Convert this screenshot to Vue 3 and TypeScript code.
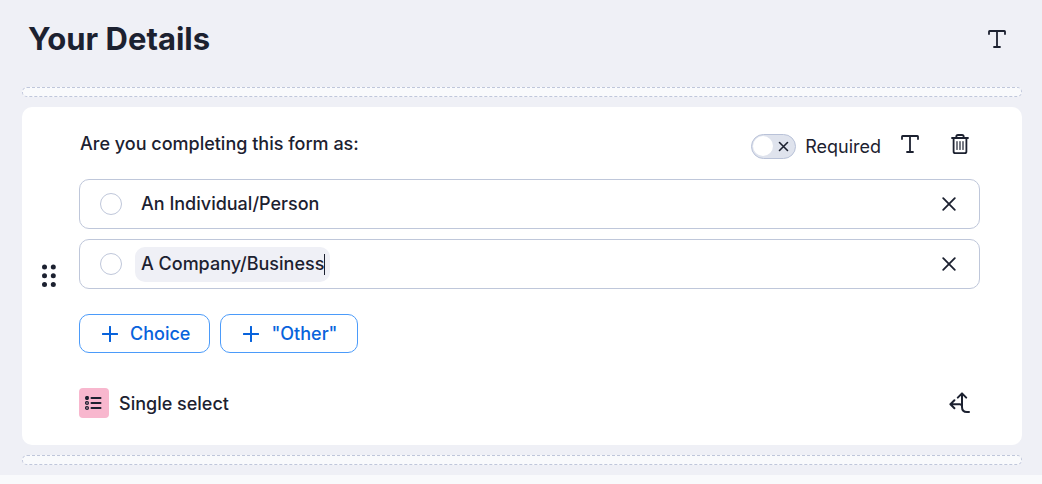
<script setup lang="ts">
import { ref } from 'vue'

interface Choice {
  id: number
  label: string
}

const title = ref('Your Details')
const question = ref('Are you completing this form as:')
const required = ref(false)
const activeId = ref(2)
const choices = ref<Choice[]>([
  { id: 1, label: 'An Individual/Person' },
  { id: 2, label: 'A Company/Business' },
])

function addChoice(label: string) {
  const id = Math.max(0, ...choices.value.map((c) => c.id)) + 1
  choices.value.push({ id, label })
  activeId.value = id
}

function removeChoice(id: number) {
  choices.value = choices.value.filter((c) => c.id !== id)
}
</script>

<template>
  <main class="section">
    <header class="section-head">
      <h1>{{ title }}</h1>
      <button class="icon-btn" type="button" aria-label="Section text">
        <svg width="20" height="20" viewBox="0 0 20 20" class="line">
          <path d="M2 5V2.6Q2 2 2.6 2H17.4Q18 2 18 2.600V5M10 2V18M7 18H13" />
        </svg>
      </button>
    </header>

    <div class="drop-zone"></div>

    <article class="card">
      <button class="handle" type="button" aria-label="Move question">
        <svg width="14" height="24" viewBox="0 0 14 24">
          <g fill="#1c2130">
            <circle cx="2.500" cy="3" r="2.500" /><circle cx="11.300" cy="3" r="2.500" />
            <circle cx="2.500" cy="11.700" r="2.500" /><circle cx="11.300" cy="11.700" r="2.500" />
            <circle cx="2.500" cy="20.400" r="2.500" /><circle cx="11.300" cy="20.400" r="2.500" />
          </g>
        </svg>
      </button>

      <div class="content">
        <div class="question-row">
          <h2>{{ question }}</h2>
          <label class="required">
            <span class="toggle">
              <input v-model="required" type="checkbox" role="switch" />
              <span class="knob"></span>
              <svg width="11" height="11" viewBox="0 0 11 11" class="line">
                <path d="M1.500 1.500L9.500 9.500M9.500 1.500L1.500 9.500" />
              </svg>
            </span>
            <span class="required-text">Required</span>
          </label>
          <button class="icon-btn" type="button" aria-label="Question text">
            <svg width="20" height="20" viewBox="0 0 20 20" class="line">
              <path d="M2 5V2.600Q2 2 2.600 2H17.400Q18 2 18 2.600V5M10 2V18M7 18H13" />
            </svg>
          </button>
          <button class="icon-btn trash" type="button" aria-label="Delete question">
            <svg width="20" height="22" viewBox="0 0 20 22" class="line">
              <path d="M2 5H18M3.600 5V18.500Q3.600 20.200 5.300 20.200H14.700Q16.400 20.200 16.400 18.500V5M6.300 5V3.800Q6.300 2 8 2H12Q13.700 2 13.700 3.800V5" />
              <path class="thin" d="M7 8.500V16.500M10 8.500V16.500M13 8.500V16.500" />
            </svg>
          </button>
        </div>

        <ul class="choices">
          <li v-for="choice in choices" :key="choice.id" class="choice">
            <input class="radio" type="radio" name="answer" :aria-label="choice.label" disabled />
            <span class="editor" :class="{ active: choice.id === activeId }">
              <input
                v-model="choice.label"
                class="choice-text"
                type="text"
                aria-label="Choice text"
                @focus="activeId = choice.id"
              />
              <span v-if="choice.id === activeId" class="caret"></span>
            </span>
            <button class="icon-btn remove" type="button" aria-label="Remove choice" @click="removeChoice(choice.id)">
              <svg width="14" height="14" viewBox="0 0 14 14" class="line">
                <path d="M1.200 1.200L12.800 12.800M12.800 1.200L1.200 12.800" />
              </svg>
            </button>
          </li>
        </ul>

        <div class="actions">
          <button class="add" type="button" @click="addChoice('')">
            <svg width="16" height="16" viewBox="0 0 16 16"><path d="M8 .8V15.200M.8 8H15.200" /></svg>
            Choice
          </button>
          <button class="add" type="button" @click="addChoice('Other')">
            <svg width="16" height="16" viewBox="0 0 16 16"><path d="M8 .8V15.200M.8 8H15.200" /></svg>
            "Other"
          </button>
        </div>

        <footer class="card-foot">
          <span class="type-badge">
            <svg width="18" height="16" viewBox="0 0 18 16">
              <g fill="none" stroke="#1c2130">
                <path stroke-width="2" stroke-linecap="round" d="M6.500 3H15.500M6.500 8H15.500M6.500 13H15.500" />
                <rect x=".8" y="1.800" width="2.400" height="2.400" rx=".6" fill="#1c2130" stroke-width="1.400" />
                <circle cx="2" cy="8" r="1.400" stroke-width="1.300" />
                <circle cx="2" cy="13" r="1.400" stroke-width="1.300" />
              </g>
            </svg>
          </span>
          <span class="type-name">Single select</span>
          <button class="icon-btn" type="button" aria-label="Branching logic">
            <svg width="22" height="22" viewBox="0 0 22 22" class="line branch">
              <path d="M20 20H18Q13 20 13 15V1.600M8.800 5.600L13 1.400L17.200 5.600M13 14Q12.600 12.300 10.800 12.300H1.500M5.400 8.300L1.400 12.300L5.400 16.200" />
            </svg>
          </button>
        </footer>
      </div>
    </article>

    <div class="drop-zone"></div>
  </main>
</template>

<style>
body {
  background: #f9fafc;
}
</style>

<style scoped>
.section {
  box-sizing: border-box;
  display: flex;
  flex-direction: column;
  gap: 10px;
  padding: 0 20px 10px 22px;
  background: #eff0f6;
  color: #1c2130;
  font-family: Inter, "Liberation Sans", sans-serif;
  font-size: 18px;
  line-height: 24px;
}

button {
  font: inherit;
  color: inherit;
  cursor: pointer;
}

svg {
  display: block;
}

.line {
  fill: none;
  stroke: #1c2130;
  stroke-width: 1.8;
  stroke-linecap: round;
  stroke-linejoin: round;
}

.line.branch {
  stroke-width: 2;
}

.thin {
  stroke-width: 1.2;
}

.section-head {
  display: flex;
  align-items: center;
  justify-content: space-between;
  height: 77px;
  padding: 0 15px 0 6px;
}

h1 {
  margin: 0;
  font-size: 31px;
  font-weight: 700;
  line-height: 40px;
}

.icon-btn {
  display: flex;
  flex: none;
  padding: 0;
  border: 0;
  background: none;
}

.drop-zone {
  box-sizing: border-box;
  height: 10px;
  border: 1px dashed #c0c7db;
  border-radius: 5px;
  background: #f9fafc;
}

.card {
  display: flex;
  align-items: center;
  padding: 24px 42px 27px 20px;
  border-radius: 10px;
  background: #fff;
}

.handle {
  flex: none;
  width: 37px;
  padding: 2px 0 0;
  border: 0;
  background: none;
}

.content {
  flex: 1;
  min-width: 0;
}

.question-row {
  display: flex;
  align-items: center;
  height: 26px;
  padding: 0 10px 0 1px;
}

h2 {
  flex: 1;
  margin: 0;
  font-size: 18px;
  font-weight: 500;
}

.required {
  display: flex;
  align-items: center;
  gap: 9px;
  margin-right: 19px;
  padding-top: 4px;
}

.required-text {
  padding-top: 2px;
}

.toggle {
  box-sizing: border-box;
  position: relative;
  display: flex;
  align-items: center;
  justify-content: space-between;
  width: 45px;
  height: 25px;
  padding: 0 6px 0 1px;
  border: 1px solid #b9c2d8;
  border-radius: 13px;
  background: #dfe3ed;
}

.toggle input {
  position: absolute;
  inset: 0;
  margin: 0;
  opacity: 0;
}

.toggle .line {
  stroke-width: 1.6;
}

.knob {
  width: 20px;
  height: 20px;
  border-radius: 50%;
  background: #fff;
}

.trash {
  margin-left: 30px;
}

.choices {
  display: grid;
  gap: 10px;
  margin: 22px 0 0;
  padding: 0;
  list-style: none;
}

.choice {
  box-sizing: border-box;
  display: flex;
  align-items: center;
  height: 50px;
  padding: 0 23px 0 20px;
  border: 1px solid #bfc7da;
  border-radius: 10px;
}

.radio {
  appearance: none;
  flex: none;
  width: 22px;
  height: 22px;
  margin: 0 13px 0 0;
  border: 1px solid #bfc7da;
  border-radius: 50%;
}

.editor {
  display: flex;
  align-items: center;
  height: 35px;
  padding: 0 5px 0 6px;
  border-radius: 10px;
}

.editor.active {
  background: #eff0f6;
}

.choice-text {
  field-sizing: content;
  min-width: 20px;
  padding: 0;
  border: 0;
  outline: 0;
  background: none;
  color: inherit;
  font: inherit;
  font-weight: 500;
}

.caret {
  width: 1px;
  height: 21px;
  background: #1c2130;
}

.remove {
  margin-left: auto;
}

.actions {
  display: flex;
  gap: 10px;
  margin-top: 25px;
}

.add {
  box-sizing: border-box;
  display: flex;
  align-items: center;
  gap: 12px;
  height: 39px;
  padding: 0 19px 0 22px;
  border: 1px solid #4b9bfa;
  border-radius: 10px;
  background: #fff;
  color: #0863dc;
  font-weight: 500;
}

.add path {
  stroke: #0863dc;
  stroke-width: 2;
  stroke-linecap: round;
}

.card-foot {
  display: flex;
  align-items: center;
  margin-top: 35px;
  padding-right: 9px;
}

.type-badge {
  display: flex;
  align-items: center;
  justify-content: center;
  width: 30px;
  height: 30px;
  border-radius: 4px;
  background: #f8b7ce;
}

.type-name {
  flex: 1;
  margin-left: 10px;
  padding-top: 2px;
  font-weight: 500;
}
</style>
